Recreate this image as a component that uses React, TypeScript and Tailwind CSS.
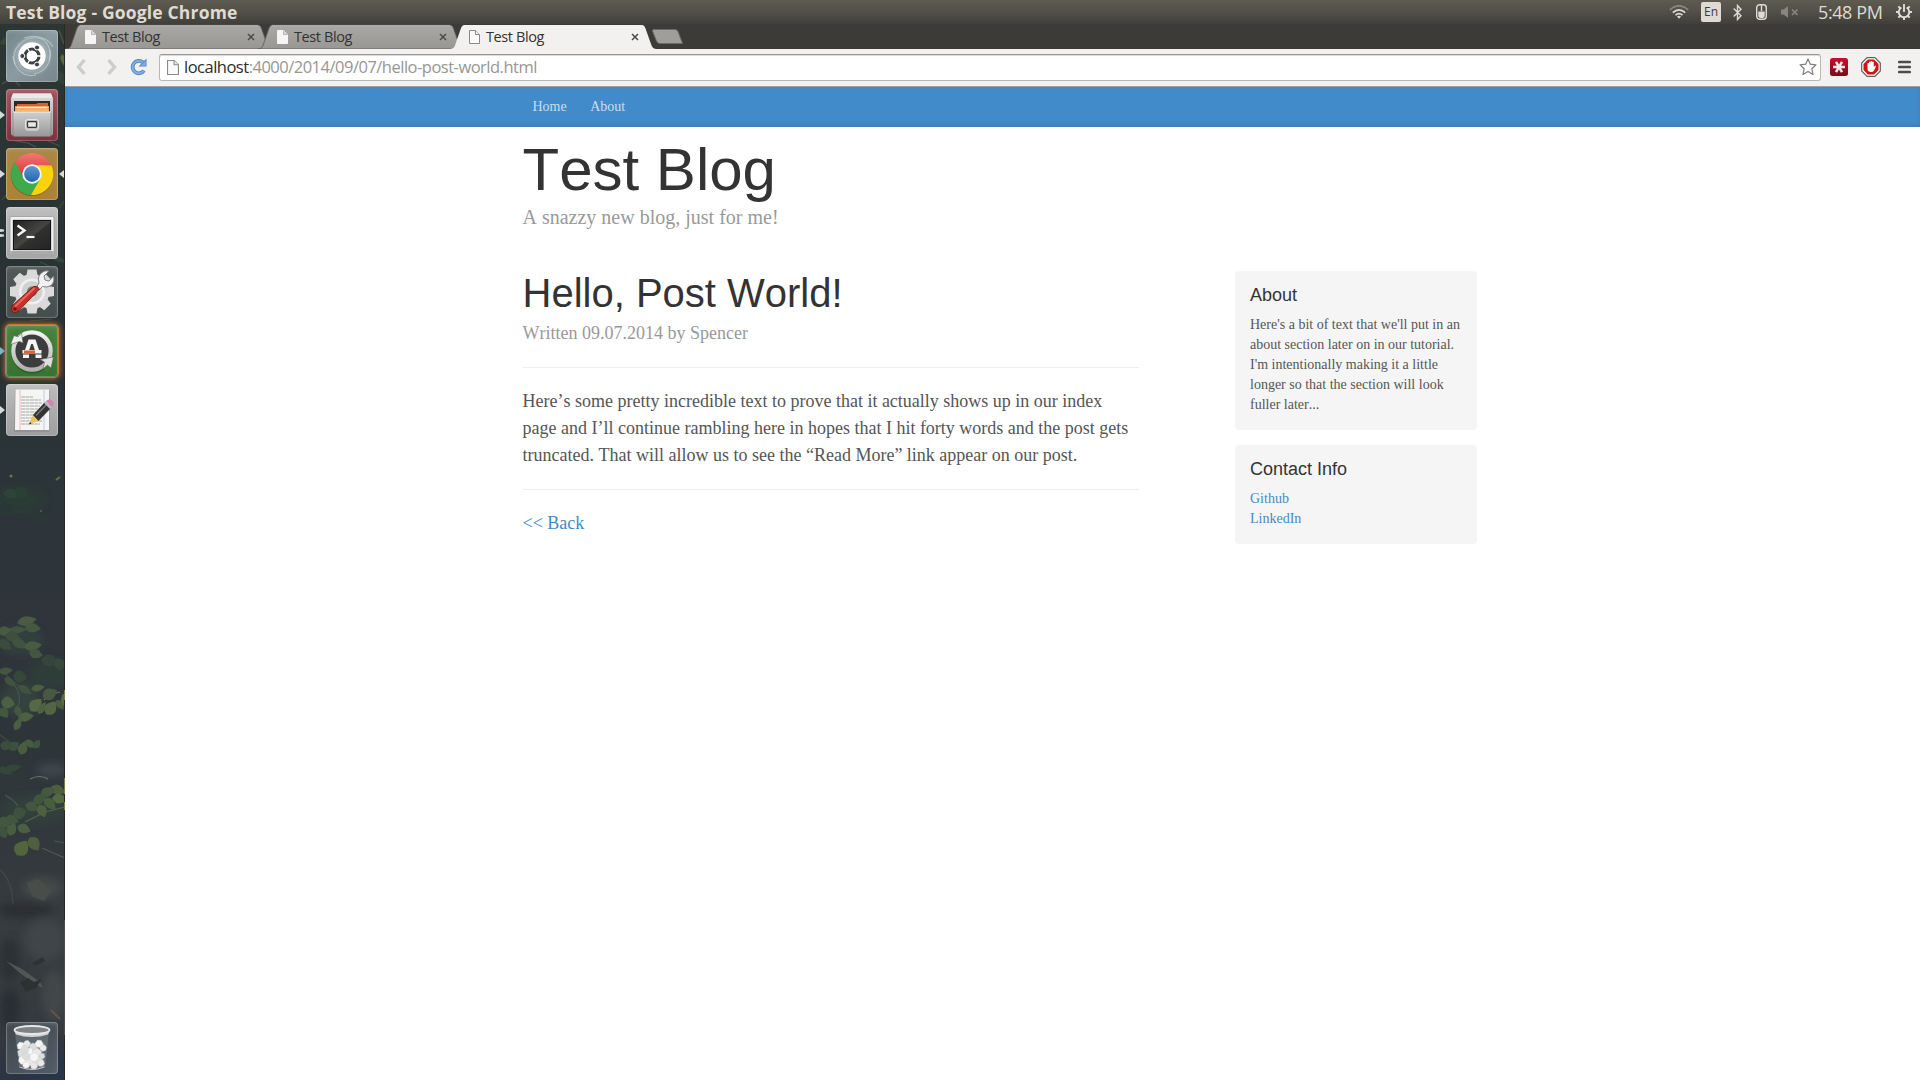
import React from "react";

/* ---------- Launcher wallpaper ---------- */
const leaves: [number, number, number, number, number, string][] = [
  // x, y, length, width, rotation, colour
  [27, 621, 10, 4, -12, "#4b5a40"], [33, 628, 8, 4, 5, "#46583f"], [18, 630, 9, 3, -3, "#42543f"],
  [5, 631, 7, 4, -10, "#475a42"], [13, 637, 8, 4, 15, "#3d4f3d"], [20, 644, 9, 4, 25, "#41533f"],
  [33, 646, 9, 4, -8, "#4a5b42"], [36, 654, 7, 4, 15, "#45573f"], [5, 645, 8, 4, 35, "#3a4b3c"],
  [50, 661, 9, 5, 12, "#34453a"], [60, 664, 6, 5, -20, "#38483a"], [6, 671, 7, 3, -10, "#45573f"],
  [20, 677, 7, 5, 10, "#35463a"], [10, 682, 7, 3, 40, "#3f523d"], [25, 690, 8, 3, 30, "#40533f"],
  [38, 688, 7, 3, -10, "#4b5d42"], [50, 694, 8, 5, -28, "#48593f"], [36, 705, 8, 5, -48, "#566947"],
  [42, 708, 7, 3, -60, "#4e6243"], [51, 708, 8, 5, -55, "#526544"], [60, 705, 6, 3, 55, "#4a5c3e"],
  [64, 700, 3, 5, 0, "#596b3d"], [8, 703, 7, 5, 10, "#4c6044"], [18, 712, 6, 3, 70, "#445840"],
  [26, 717, 8, 4, -10, "#4d6042"], [18, 724, 7, 3, -65, "#4a5e42"], [4, 713, 6, 4, 50, "#43563f"],
  [23, 748, 7, 4, -75, "#4b5d41"], [30, 744, 6, 3, 40, "#4a5b3f"], [14, 746, 6, 4, -35, "#3e5140"],
  [6, 746, 6, 4, 20, "#3b4d3e"], [37, 744, 5, 3, -60, "#415440"], [13, 768, 9, 3, -12, "#344639"],
  [5, 771, 8, 3, 20, "#34463a"], [58, 790, 8, 4, 20, "#4d5f3c"], [48, 792, 8, 4, -20, "#46593f"],
  [40, 799, 8, 4, -35, "#42553e"], [60, 799, 8, 4, 8, "#56683f"], [50, 804, 8, 4, 45, "#4a5d40"],
  [32, 807, 7, 4, 20, "#43573f"], [42, 811, 7, 4, 65, "#4d6042"], [20, 813, 7, 5, -20, "#3d513e"],
  [12, 820, 7, 4, 15, "#43573f"], [24, 829, 7, 4, 20, "#4c5f42"], [4, 823, 7, 5, 30, "#43563f"],
  [12, 829, 7, 4, -65, "#4a5d42"], [3, 833, 6, 4, 60, "#3f523f"], [22, 848, 9, 6, -55, "#53653e"],
  [34, 844, 8, 5, 55, "#4f5e3d"], [12, 494, 9, 4, 5, "#2f4339"], [22, 493, 7, 5, 15, "#2c4036"],
  [7, 509, 9, 4, 60, "#2a3936"], [40, 518, 8, 4, 30, "#2a3936"], [8, 40, 9, 3, -25, "#384538"],
  [60, 78, 8, 4, 60, "#33423a"], [60, 260, 9, 2, 20, "#35453b"], [63, 60, 6, 2, 80, "#5a6a38"],
];

const streaks: [string, string][] = [
  ["M2 84 L12 78 L20 86", "#4a5650"], ["M59 30 L64 44", "#505c40"], ["M10 140 L28 143 L36 147", "#4a5752"],
  ["M48 141 L60 146", "#41504a"], ["M2 200 L7 194", "#46534c"], ["M59 208 L65 200", "#3e4b44"],
  ["M40 262 L58 270", "#3c4c42"], ["M30 321 L52 319", "#3c4944"], ["M0 669 L16 684 L30 694", "#414c48"],
  ["M14 684 Q25 700 14 712", "#4a544e"], ["M60 692 Q50 694 44 700", "#66716a"], ["M0 735 L18 748", "#414b47"],
  ["M30 779 Q40 774 48 779", "#69736f"], ["M5 795 Q14 800 18 806", "#4d5655"], ["M65 807 L45 812 L25 822", "#566153"],
  ["M42 848 L65 858", "#4e5a55"], ["M0 870 Q12 880 13 904", "#414a49"], ["M54 841 L65 843", "#4c5652"],
];

function Wallpaper() {
  return (
    <svg className="absolute inset-0 h-full w-full" viewBox="0 24 65 1056" preserveAspectRatio="none">
      <defs>
        <linearGradient id="wall" x1="0" y1="0" x2="0" y2="1">
          <stop offset="0" stopColor="#2c3634" />
          <stop offset=".3" stopColor="#283233" />
          <stop offset=".45" stopColor="#2c3539" />
          <stop offset=".58" stopColor="#2f353b" />
          <stop offset=".68" stopColor="#2d3539" />
          <stop offset=".85" stopColor="#363c3f" />
          <stop offset=".95" stopColor="#343a3e" />
          <stop offset="1" stopColor="#2b3441" />
        </linearGradient>
        <filter id="soft" x="-50%" y="-50%" width="200%" height="200%"><feGaussianBlur stdDeviation="4" /></filter>
        <filter id="fine" x="-5%" y="-5%" width="110%" height="110%"><feGaussianBlur stdDeviation=".7" /></filter>
      </defs>
      <rect y="24" width="65" height="1056" fill="url(#wall)" />
      <g filter="url(#soft)">
        <ellipse cx="20" cy="500" rx="25" ry="12" fill="#2b3a36" />
        <ellipse cx="50" cy="675" rx="22" ry="14" fill="#2f3e38" />
        <ellipse cx="20" cy="700" rx="20" ry="16" fill="#34423d" />
        <ellipse cx="20" cy="640" rx="22" ry="14" fill="#33413c" />
        <ellipse cx="35" cy="810" rx="34" ry="14" fill="#33403b" />
        <ellipse cx="52" cy="770" rx="15" ry="7" fill="#3f474b" />
        <ellipse cx="42" cy="888" rx="20" ry="11" fill="#424948" />
        <ellipse cx="25" cy="910" rx="28" ry="8" fill="#292f32" />
        <ellipse cx="45" cy="940" rx="20" ry="22" fill="#3f4548" />
        <ellipse cx="10" cy="960" rx="10" ry="22" fill="#2a3135" />
        <ellipse cx="54" cy="995" rx="12" ry="25" fill="#43474a" />
        <ellipse cx="10" cy="1008" rx="9" ry="20" fill="#282e33" />
        <path d="M40 1020 L65 1062 V1080 H20Z" fill="#27344c" />
      </g>
      <g filter="url(#fine)">
        {streaks.map(([d, c], i) => <path key={i} d={d} stroke={c} strokeWidth="1.1" fill="none" />)}
        {leaves.map(([x, y, l, w, r, c], i) => (
          <path
            key={i}
            d={`M${-l} 0 Q${-l / 3} ${-w * 2.5} ${l} 0 Q${-l / 3} ${w * 2.3} ${-l} 0`}
            transform={`translate(${x} ${y}) rotate(${r})`}
            fill={c}
          />
        ))}
        <path d="M27 883 L38 879 L51 891 L44 901 L32 896Z" fill="#494e4a" />
        <path d="M6 961 L22 969 L40 982 L43 988 L35 984 L20 973Z" fill="#505856" />
        <path d="M20 982 L28 978 L34 982 L42 979 L36 988 L26 992Z" fill="#2c3233" />
        <path d="M32 963 L43 957 L45 961 L36 966Z" fill="#2d3335" />
        <path d="M51 1010 L60 1019" stroke="#5f5749" strokeWidth="2" />
        <circle cx="11" cy="476" r="1.5" fill="#6c7a38" />
        <path d="M56 480 L60 477" stroke="#62733a" strokeWidth="2" />
        <circle cx="41" cy="511" r="1" fill="#52635a" />
      </g>
      <rect x="64" y="24" width="1" height="1056" fill="#232a28" />
      <path d="M64.500 690v10M64.500 778v16M64.500 802v8" stroke="#6f8038" />
      <path d="M64.500 920v115" stroke="#554d4b" />
    </svg>
  );
}

/* ---------- Launcher glyphs (52x52 canvas) ---------- */
function DashIcon() {
  return (
    <svg viewBox="0 0 52 52" className="size-full">
      <defs>
        <radialGradient id="dashg"><stop offset=".4" stopColor="#d8dfe2" stopOpacity=".9" /><stop offset="1" stopColor="#a8b4ba" stopOpacity=".1" /></radialGradient>
      </defs>
      <circle cx="26" cy="26" r="20" fill="url(#dashg)" />
      <g fill="none" stroke="#d3dcdf" strokeOpacity=".55" strokeWidth="1.2">
        <path d="M9 34 C4 18 18 6 32 8 C42 10 46 20 43 30" />
        <path d="M7 26 C8 38 17 48 30 45" />
        <path d="M18 8 C30 4 42 8 47 17" />
        <path d="M44 20 C46 34 38 42 28 44" />
      </g>
      <circle cx="26" cy="26.500" r="14" fill="#6f7c82" fillOpacity=".5" />
      <circle cx="26" cy="26" r="13.700" fill="#fff" />
      <circle cx="26" cy="26" r="7" fill="none" stroke="#3d4246" strokeWidth="3.200" />
      <g stroke="#fff" strokeWidth="1.300">
        <path d="M26 26 L37 26 M26 26 L20.500 16.500 M26 26 L20.500 35.500" />
      </g>
      <circle cx="26" cy="26" r="5.200" fill="#fff" />
      <g fill="#3d4246" stroke="#fff" strokeWidth="1">
        <circle cx="16.300" cy="26" r="2.500" /><circle cx="31" cy="17.500" r="2.500" /><circle cx="31" cy="34.500" r="2.500" />
      </g>
    </svg>
  );
}

function FilesIcon() {
  return (
    <svg viewBox="0 0 52 52" className="size-full">
      <defs>
        <linearGradient id="cab" x1="0" y1="0" x2="0" y2="1"><stop offset="0" stopColor="#dcdcdc" /><stop offset="1" stopColor="#9b9b9b" /></linearGradient>
        <linearGradient id="cab2" x1="0" y1="0" x2="0" y2="1"><stop offset="0" stopColor="#d0d0d0" /><stop offset="1" stopColor="#989898" /></linearGradient>
      </defs>
      <path d="M7 4.500h38l2 5v35q0 2-2 2H7q-2 0-2-2v-35z" fill="url(#cab)" />
      <path d="M7 4.500h38l1.500 4.500h-41z" fill="#e9e9e9" />
      <path d="M8 12h36v13H8z" fill="#2e2826" />
      <path d="M11 15h19l2-1h10v8H11z" fill="#d75f32" />
      <path d="M9 17h34v6H9z" fill="#eda55b" />
      <path d="M10.500 18.500h31" stroke="#fff0df" strokeWidth="1.200" />
      <path d="M10 21h32" stroke="#f1b469" strokeWidth="2" />
      <path d="M7 22.500h38V46q0 1.500-1.500 1.500h-35Q7 47.500 7 46z" fill="url(#cab2)" stroke="#777" strokeWidth=".5" />
      <path d="M7 23h38" stroke="#f4f4f4" />
      <rect x="19.500" y="30.500" width="13" height="10.500" rx="2" fill="#bcbcbc" stroke="#e5e5e5" strokeWidth="1" />
      <rect x="21.500" y="32.700" width="9" height="5.600" rx=".8" fill="#e6e6e6" stroke="#353535" strokeWidth="1.200" />
    </svg>
  );
}

function ChromeIcon() {
  return (
    <svg viewBox="0 0 52 52" className="size-full">
      <defs>
        <linearGradient id="cr" x1="0" y1="0" x2="0" y2="1"><stop offset="0" stopColor="#f07a76" /><stop offset="1" stopColor="#dc2a2c" /></linearGradient>
        <linearGradient id="cb" x1="0" y1="0" x2="0" y2="1"><stop offset="0" stopColor="#5c9ad4" /><stop offset="1" stopColor="#2364ae" /></linearGradient>
      </defs>
      <circle cx="26" cy="26.800" r="21.300" fill="#5f4a1c" fillOpacity=".55" />
      <circle cx="26" cy="26" r="21" fill="#3faa4b" />
      <path d="M26 26 L34.500 30.500 L25 47 A21 21 0 0 0 45.500 17.500 L26 17Z" fill="#fbd20d" />
      <path d="M26 17 H45.200 A21 21 0 0 0 9 13.800 L18 30.500 A9 9 0 0 1 26 17Z" fill="url(#cr)" />
      <circle cx="26" cy="26" r="9.700" fill="#f5f5f3" />
      <circle cx="26" cy="26" r="7.900" fill="url(#cb)" />
    </svg>
  );
}

function TerminalIcon() {
  return (
    <svg viewBox="0 0 52 52" className="size-full">
      <defs>
        <linearGradient id="tm" x1="0" y1="0" x2="1" y2="1"><stop offset="0" stopColor="#20201f" /><stop offset=".5" stopColor="#454543" /><stop offset=".55" stopColor="#30302f" /><stop offset="1" stopColor="#252525" /></linearGradient>
      </defs>
      <rect x="4" y="9.500" width="44" height="38" rx="1.500" fill="#f1f1f1" stroke="#9b9b9b" strokeWidth=".8" />
      <path d="M4.500 44h43v2q0 1.500-1.500 1.500H6q-1.500 0-1.500-1.500z" fill="#aaa" />
      <rect x="6.500" y="12.500" width="39" height="31" fill="#b8b8b8" />
      <rect x="7.500" y="13.500" width="37" height="29" fill="url(#tm)" stroke="#161616" />
      <path d="M11.500 18.500l7 5-7 5" fill="none" stroke="#f5f5f5" strokeWidth="2.400" />
      <path d="M20.500 30h8" stroke="#f5f5f5" strokeWidth="2.200" />
    </svg>
  );
}

function SettingsIcon() {
  const teeth = [0, 45, 90, 135, 180, 225, 270, 315];
  return (
    <svg viewBox="0 0 52 52" className="size-full">
      <g fill="#d9dad9">
        {teeth.map((t) => <path key={t} d="M20.500 9 L21.500 3.500 H30.500 L31.500 9Z" transform={`rotate(${t} 26 25.500)`} />)}
        <circle cx="26" cy="25.500" r="17.500" />
      </g>
      <circle cx="26" cy="25.500" r="13" fill="#eeefee" />
      <circle cx="26" cy="25.500" r="10.500" fill="#cfd1d0" />
      <circle cx="26" cy="25.500" r="5" fill="#737876" />
      <path d="M30 22 L33 17 Q31 10 36 6.500 Q39 4 43 5 L38 10 L39 14 L43 15 L47.500 10 Q49 16 45 19.500 Q41 22 36.500 20.500 L33 24Z" fill="#f0f1f0" stroke="#7e8280" strokeWidth="1" />
      <path d="M27.500 20.500 Q31 19 33.500 23 L13 44.500 Q9 48.500 6 45.500 Q4 42 7.500 38.500Z" fill="#c9302a" stroke="#7d1713" strokeWidth=".9" />
      <path d="M28 22.500 L9.500 40" stroke="#e9685e" strokeWidth="2" strokeLinecap="round" />
      <circle cx="9" cy="43" r="1.800" fill="#701410" />
    </svg>
  );
}

function UpdaterIcon() {
  return (
    <svg viewBox="0 0 52 52" className="size-full">
      <defs>
        <linearGradient id="up" x1="0" y1="0" x2="0" y2="1"><stop offset="0" stopColor="#f2f2f1" /><stop offset="1" stopColor="#aeb1ad" /></linearGradient>
      </defs>
      <circle cx="26" cy="27.500" r="21" fill="#1c3f17" fillOpacity=".4" />
      <circle cx="26" cy="26" r="17.500" fill="#3c3d3c" />
      <circle cx="26" cy="26" r="18.700" fill="none" stroke="url(#up)" strokeWidth="4.200" />
      <path d="M5.500 10 L11 4 L13 9 L9 14Z" fill="#427e37" />
      <path d="M46.500 42 L41 48 L38 43 L43 38Z" fill="#3d7a33" />
      <path d="M15.500 8 L17 18 L13.500 16.500 L4.500 19.500 L8 10.500 L12 12Z" fill="#eeeeed" stroke="#5d615b" strokeWidth=".6" />
      <path d="M34 34.500 L47.500 32 L45 43 L41.500 40 L37 44 L38.500 37Z" fill="#dee0dd" stroke="#5d615b" strokeWidth=".6" />
      <path d="M22.500 14.500H29.500L33 25H28.800L26.800 19H25.200L23.200 25H19Z" fill="#f5f5f5" />
      <path d="M16.500 25h19v3.500h-19z" fill="#f3f3f3" />
      <path d="M18 25.500h11v3H18z" fill="#e0612d" />
      <path d="M17 29.500h6v3.500h-6zM29.500 29.500h6v3.500h-6z" fill="#f3f3f3" />
    </svg>
  );
}

function EditorIcon() {
  const lines = [13, 16, 19, 22, 25, 28, 31, 34, 37, 40];
  return (
    <svg viewBox="0 0 52 52" className="size-full">
      <path d="M9 6h34.500v42H8z" fill="#88898a" fillOpacity=".6" />
      <path d="M9.500 5.500H43V46H9z" fill="#f5f5f4" />
      <path d="M14 6v40" stroke="#f0b7b4" strokeWidth=".9" />
      <path d="M38 6v40" stroke="#b6c8e8" strokeWidth=".9" />
      {lines.map((y, i) => <path key={y} d={`M15 ${y}h${i === 0 ? 12 : 19 + (i % 3)}`} stroke="#a7a7a7" strokeWidth="1" strokeDasharray="4 .5" />)}
      <path d="M23 40.500 L27 31 L32.500 37Z" fill="#e9c463" />
      <path d="M27 31 L38.500 18.500 L44.500 24.500 L32.500 37Z" fill="#343434" />
      <path d="M30 31.500 L40.500 20.500" stroke="#77777a" strokeWidth="1.500" />
      <path d="M38 19 L40 17 L45.800 23 L44 25Z" fill="#b9bcbd" />
      <path d="M40 17 Q44 14 47 17.500 Q48 21 45.800 23Z" fill="#d981b0" />
      <path d="M23 40.500 L24 38 L25.500 39.500Z" fill="#222" />
    </svg>
  );
}

function TrashIcon() {
  const paper: [number, number, number][] = [
    [15, 24, 4], [21, 22, 3.5], [27, 25, 4], [33, 22, 4], [37, 26, 3.4], [16, 31, 4.5], [23, 30, 4.5],
    [31, 31, 4.8], [36, 34, 3], [17, 38, 4.5], [24, 39, 5], [32, 39, 4.8], [20, 43, 3.5], [28, 44, 3.5],
    [19, 27, 4], [28, 35, 4.5], [35, 41, 3.5], [20, 34, 4],
  ];
  return (
    <svg viewBox="0 0 52 52" className="size-full">
      <path d="M9 10 H43 L39 45 Q26 50 13 45Z" fill="#8c9298" fillOpacity=".38" />
      <g strokeLinejoin="round">
        {paper.map(([x, y, r], i) => (
          <path
            key={i}
            transform={`translate(${x} ${y}) rotate(${i * 37})`}
            d={`M${-r} -1 L${-r * 0.4} ${-r} L${r * 0.7} ${-r * 0.8} L${r} ${r * 0.3} L${r * 0.2} ${r} L${-r * 0.8} ${r * 0.7}Z`}
            fill={i % 3 === 0 ? "#f6f6f5" : i % 3 === 1 ? "#e8e9e8" : "#dcdedd"}
            stroke="#c4c7c6"
            strokeWidth=".3"
          />
        ))}
      </g>
      <path d="M13.500 45 Q26 50 38.500 45" fill="none" stroke="#c6c9ca" strokeWidth="1" />
      <path d="M8 8.500 L10 12.500 Q26 17.500 42 12.500 L44 8.500Z" fill="#d3d5d5" />
      <ellipse cx="26" cy="8" rx="17.500" ry="4" fill="#7d8285" stroke="#e6e7e7" strokeWidth="1.800" />
    </svg>
  );
}

type Tile = { name: string; bg: string; icon: React.ReactNode; left?: "one" | "two" | "blue"; right?: boolean };

const tiles: Tile[] = [
  { name: "Dash", bg: "bg-linear-to-br from-[#73858d] via-[#8c9ba1] to-[#76868c]", icon: <DashIcon /> },
  { name: "Files", bg: "bg-linear-to-b from-[#a3535f] to-[#802f3c]", icon: <FilesIcon />, left: "one" },
  { name: "Google Chrome", bg: "bg-linear-to-b from-[#a98745] to-[#ab8334]", icon: <ChromeIcon />, left: "one", right: true },
  { name: "Terminal", bg: "bg-linear-to-b from-[#bdbdbd] to-[#a5a5a5]", icon: <TerminalIcon />, left: "two" },
  { name: "System Settings", bg: "bg-linear-to-b from-[#505957] to-[#444e4c]", icon: <SettingsIcon /> },
  { name: "Software Updater", bg: "bg-linear-to-b from-[#49843e] to-[#37722e] ring-1 ring-[#c9703c] shadow-[0_0_5px_2px_rgba(214,115,55,0.75)]", icon: <UpdaterIcon />, left: "blue" },
  { name: "Text Editor", bg: "bg-linear-to-b from-[#bcbcbc] to-[#9e9e9e]", icon: <EditorIcon />, left: "one" },
];

function LauncherTile({ tile }: { tile: Tile }) {
  return (
    <div className="flex h-[52px] w-[65px] items-center">
      <div className="flex w-[6px] items-center">
        {tile.left && (
          <svg width="6" height="10" viewBox="0 0 6 10">
            {tile.left === "two" ? (
              <path d="M0 1l4 .5v2L0 4zM0 6l4 .5v2L0 9z" fill="#d8dada" />
            ) : (
              <path d="M0 1l5 4-5 4z" fill={tile.left === "blue" ? "#73bcdb" : "#d8dada"} />
            )}
          </svg>
        )}
      </div>
      <div title={tile.name} className={`size-[52px] rounded-[4px] ${tile.bg}`}>
        <div className="size-full rounded-[4px] shadow-[inset_0_0_0_1px_rgba(255,255,255,0.2),inset_0_2px_4px_rgba(255,255,255,0.15)]">{tile.icon}</div>
      </div>
      <div className="flex w-[7px] justify-end pr-[1px]">
        {tile.right && <svg width="5" height="8" viewBox="0 0 5 8"><path d="M5 0v8L0 4z" fill="#d8dada" /></svg>}
      </div>
    </div>
  );
}

function Launcher() {
  return (
    <aside className="relative h-full w-[65px] shrink-0 overflow-hidden">
      <Wallpaper />
      <div className="relative flex h-full flex-col gap-[7px] pt-[6px] pb-[6px]">
        {tiles.map((t) => <LauncherTile key={t.name} tile={t} />)}
        <div className="mt-auto">
          <LauncherTile tile={{ name: "Trash", bg: "bg-linear-to-br from-[#3f474c] to-[#535d68]", icon: <TrashIcon /> }} />
        </div>
      </div>
    </aside>
  );
}

/* ---------- System panel ---------- */
function Panel() {
  return (
    <header className="flex h-6 shrink-0 items-center justify-between bg-linear-to-b from-[#5e5b50] via-[#514f47] to-[#403f3a] pr-2 pl-[6px] font-['Open_Sans','Noto_Sans',sans-serif] text-[#dfdbd2]">
      <span className="pt-px text-[17.5px] leading-[23px] font-bold tracking-[0.17px] whitespace-nowrap">Test Blog - Google Chrome</span>
      <div className="flex h-6 items-center">
        <svg width="20" height="14" viewBox="0 0 20 14" fill="none" className="mr-3">
          <path d="M.8 4.800Q10-3.200 19.200 4.800" stroke="#8b887f" strokeWidth="1.700" />
          <path d="M3.800 7.600Q10 2 16.200 7.600" stroke="#dfdbd2" strokeWidth="1.700" />
          <path d="M6.500 10.200Q10 7 13.500 10.200" stroke="#dfdbd2" strokeWidth="1.700" />
          <path d="M8 11.600Q10 10 12 11.600L10 13.700z" fill="#dfdbd2" />
        </svg>
        <span className="mr-3 flex h-5 w-5 items-center justify-center rounded-[2px] bg-[#dfdbd2] text-[12px] text-[#3c3b37]">En</span>
        <svg width="9" height="17" viewBox="0 0 9 17" className="mr-[14px]" fill="none" stroke="#dfdbd2" strokeWidth="1.400">
          <path d="M.7 4.500L8 11.800 4.500 15.500V1.500L8 5.200.7 12.500" />
        </svg>
        <svg width="11" height="16" viewBox="0 0 11 16" className="mr-[14px]">
          <rect x=".7" y=".7" width="9.600" height="14.600" rx="3" fill="none" stroke="#dfdbd2" strokeWidth="1.400" />
          <path d="M2.300 7.500h6.400v4.500q0 2-2 2H4.300q-2 0-2-2z" fill="#dfdbd2" />
          <path d="M5.500 1v6" stroke="#dfdbd2" strokeWidth="1.400" />
        </svg>
        <svg width="18" height="12" viewBox="0 0 18 12" className="mr-[19px]" fill="#88857c">
          <path d="M0 3.500h2.500L7 .3v11.400L2.500 8.500H0z" />
          <path d="M11 3.500l5.500 5.500M16.500 3.500L11 9" stroke="#88857c" strokeWidth="1.700" />
        </svg>
        <span className="mr-[13px] w-[65px] pt-px text-[18px] leading-[23px] tracking-[-0.4px] whitespace-nowrap">5:48 PM</span>
        <svg width="16" height="16" viewBox="0 0 16 16" fill="none" stroke="#dfdbd2">
          {[45, 90, 135, 180, 225, 270, 315].map((r) => <path key={r} d="M8 0v3" strokeWidth="2" transform={`rotate(${r} 8 8)`} />)}
          <path d="M5.400 3.500A5.200 5.200 0 1 0 10.600 3.500" strokeWidth="1.900" />
          <path d="M8 0v8" strokeWidth="1.900" />
        </svg>
      </div>
    </header>
  );
}

/* ---------- Browser chrome ---------- */
function PageIcon({ outlined, large }: { outlined?: boolean; large?: boolean }) {
  return (
    <svg width={large ? 12 : 11} height={large ? 15 : 14} viewBox="0 0 11 14" preserveAspectRatio="none" className="shrink-0">
      <path d="M.5.5h6l4 4v9H.5z" fill={outlined ? "#fafafa" : "#f5f5f5"} stroke={outlined ? "#8a8a8a" : "#f5f5f5"} />
      <path d="M6.500.5v4h4" fill={outlined ? "#f0f0f0" : "#d0d0d0"} stroke={outlined ? "#8a8a8a" : "#b8b8b6"} />
    </svg>
  );
}

function Tab({ active }: { active?: boolean }) {
  return (
    <div className={`relative h-[25px] w-[192px] ${active ? "z-10" : ""}`}>
      <svg className="absolute top-0 -left-px h-[25px] w-[206px]" viewBox="0 0 206 25">
        <defs>
          <linearGradient id="idle" x1="0" y1="0" x2="0" y2="1"><stop offset="0" stopColor="#a9a8a5" /><stop offset="1" stopColor="#989794" /></linearGradient>
        </defs>
        <path
          d="M0 25C4 24.500 4.500 23 5.500 20L10.500 5.500C12 2 12.500 1 15 1H191C194 1 194.500 2 195.500 4.500L201 20C202 23 203 24.500 206 25Z"
          fill={active ? "#f2f1f0" : "url(#idle)"}
          stroke={active ? "none" : "#5a5955"}
          strokeWidth=".8"
        />
        {!active && <path d="M14 1.700H192" stroke="#bbbab6" strokeWidth=".8" />}
      </svg>
      <div className="relative flex h-[25px] items-center pr-[6px] pl-[18px]">
        <PageIcon outlined={active} />
        <span className="ml-[6px] text-[14.5px] leading-[25px] tracking-[-0.4px] text-[#34332f]">Test Blog</span>
        <svg width="8" height="8" viewBox="0 0 8 8" className="-mr-[2px] ml-auto"><path d="M1 1l6 6M7 1L1 7" stroke="#4b4a47" strokeWidth="1.500" /></svg>
      </div>
    </div>
  );
}

function TabStrip() {
  return (
    <div className="flex h-[25px] bg-[#3c3b37] pl-[2px]">
      <Tab />
      <Tab />
      <Tab active />
      <svg width="32" height="16" viewBox="0 0 32 16" className="mt-[5px] ml-[9px]">
        <path d="M2 .5H23Q25 .5 26 2.500L30.500 14.500H8Q5.500 14.500 4.500 12L.5 2Q.3.500 2 .5Z" fill="#9f9e9b" stroke="#6c6b68" />
      </svg>
    </div>
  );
}

function Toolbar() {
  return (
    <div className="flex h-[38px] items-center border-b border-[#a09f9d] bg-[#f2f1f0] pr-[8px] pb-px pl-[10px]">
      <svg width="12" height="18" viewBox="0 0 12 18" className="mr-[19px]"><path d="M9.500 2L3.500 9l6 7" fill="none" stroke="#cdccca" strokeWidth="3.400" /></svg>
      <svg width="12" height="18" viewBox="0 0 12 18" className="mr-[12px]"><path d="M2.500 2l6 7-6 7" fill="none" stroke="#cdccca" strokeWidth="3.400" /></svg>
      <svg width="18" height="18" viewBox="0 0 18 18" className="mr-[11px]">
        <path d="M14 12.500A6.200 6.200 0 1 1 13 4.500" fill="none" stroke="#4f83bd" strokeWidth="3.800" />
        <path d="M16.500 .5V8.500H8.500Z" fill="#4f83bd" />
        <path d="M14 12.500A6.200 6.200 0 1 1 13 4.500" fill="none" stroke="#7fb0e2" strokeWidth="2" />
        <path d="M15.700 2.500V7.700H10.500Z" fill="#7fb0e2" />
      </svg>
      <div className="flex h-[27px] flex-1 items-center rounded-[3px] border border-[#b9b8b6] border-t-[#989795] bg-white pr-[3px] pl-[7px] shadow-[inset_0_1px_0_#dcdcdc]">
        <PageIcon outlined large />
        <span className="ml-[5px] text-[16.5px] leading-6 tracking-[-0.5px] whitespace-nowrap text-[#979694]"><span className="text-[#2d2d2b]">localhost</span>:4000/2014/09/07/hello-post-world.html</span>
        <svg width="18" height="18" viewBox="0 0 18 18" className="ml-auto">
          <path d="M9 1l2.300 5.200 5.700.6-4.200 3.900 1.200 5.800L9 13.600 4 16.500l1.200-5.800L1 6.800l5.700-.6z" fill="#fff" stroke="#807f7d" strokeWidth="1.200" strokeLinejoin="round" />
        </svg>
      </div>
      <svg width="18" height="18" viewBox="0 0 18 18" className="ml-[9px]">
        <defs><linearGradient id="lp" x1="0" y1="0" x2="0" y2="1"><stop offset="0" stopColor="#c8102c" /><stop offset="1" stopColor="#7d0a1a" /></linearGradient></defs>
        <rect width="18" height="18" rx="2.500" fill="url(#lp)" />
        <path d="M3 9h12M6 3.800l6 10.400M12 3.800L6 14.200" stroke="#f1e9ea" strokeWidth="2.500" />
      </svg>
      <svg width="20" height="20" viewBox="0 0 20 20" className="ml-[13px]">
        <path d="M6.100.7h7.800l5.400 5.400v7.800l-5.400 5.400H6.100L.7 13.900V6.100z" fill="#fff" stroke="#62615f" strokeWidth="1.200" />
        <path d="M6.900 2.500h6.200l4.400 4.400v6.200l-4.400 4.400H6.900l-4.400-4.400V6.900z" fill="#d61111" />
        <path d="M6.500 10V6.300q.8-.9 1.500 0V5q.8-1 1.600 0v-.5q.8-.8 1.600 0V5q.9-.8 1.600 0v5l1.200-1.300q1-.3 1 .7l-2 4q-.8 1.700-2.700 1.700-3.800 0-3.800-3z" fill="#fff" />
      </svg>
      <svg width="13" height="14" viewBox="0 0 13 14" className="mr-[1px] ml-[17px]"><path d="M1.300 2h10.400M1.300 7h10.400M1.300 12h10.400" stroke="#4d4c4a" strokeWidth="2.700" strokeLinecap="round" /></svg>
    </div>
  );
}

/* ---------- Blog page ---------- */
function Blog() {
  return (
    <main className="flex-1 bg-white font-['Liberation_Serif',serif] text-[#555] [font-kerning:none]">
      <nav className="h-10 bg-[#428bca] shadow-[inset_0_-2px_5px_rgba(0,0,0,0.1)]">
        <div className="mx-auto flex w-[970px] px-[15px] text-[14px] leading-5 text-[#cdddeb]">
          <a className="p-[10px]">Home</a>
          <a className="ml-[3.5px] p-[10px]">About</a>
        </div>
      </nav>
      <div className="mx-auto w-[970px] px-[15px]">
        <div className="pt-[10px]">
          <h1 className="font-['Liberation_Sans',sans-serif] text-[60px] leading-[66px] font-normal text-[#333]">Test Blog</h1>
          <p className="text-[20px] leading-[28px] text-[#999]">A snazzy new blog, just for me!</p>
        </div>
        <div className="mt-10 flex justify-between">
          <article className="w-[616.67px] text-[18px] leading-[27px]">
            <h2 className="font-['Liberation_Sans',sans-serif] text-[40px] leading-[44px] font-normal text-[#333]">Hello, Post World!</h2>
            <p className="mt-[5px] text-[#999]">Written 09.07.2014 by Spencer</p>
            <hr className="my-5 border-[#eee]" />
            <p>Here’s some pretty incredible text to prove that it actually shows up in our index page and I’ll continue rambling here in hopes that I hit forty words and the post gets truncated. That will allow us to see the “Read More” link appear on our post.</p>
            <hr className="my-5 border-[#eee]" />
            <a className="text-[#428bca]">&lt;&lt; Back</a>
          </article>
          <aside className="-mr-[14.5px] flex w-[242px] flex-col gap-[15px] text-[14px] leading-5">
            <section className="h-[159px] rounded-[4px] bg-[#f5f5f5] p-[15px]">
              <h4 className="mb-[10px] font-['Liberation_Sans',sans-serif] text-[18px] leading-[19px] text-[#333]">About</h4>
              <p>Here's a bit of text that we'll put in an about section later on in our tutorial. I'm intentionally making it a little longer so that the section will look fuller later...</p>
            </section>
            <section className="h-[99px] rounded-[4px] bg-[#f5f5f5] p-[15px]">
              <h4 className="mb-[10px] font-['Liberation_Sans',sans-serif] text-[18px] leading-[19px] text-[#333]">Contact Info</h4>
              <ul className="text-[#428bca]">
                <li>Github</li>
                <li>LinkedIn</li>
              </ul>
            </section>
          </aside>
        </div>
      </div>
    </main>
  );
}

export default function App() {
  return (
    <div className="flex h-[1080px] w-[1920px] flex-col overflow-hidden">
      <Panel />
      <div className="flex min-h-0 flex-1">
        <Launcher />
        <div className="flex min-w-0 flex-1 flex-col font-['Open_Sans','Noto_Sans',sans-serif]">
          <TabStrip />
          <Toolbar />
          <Blog />
        </div>
      </div>
    </div>
  );
}
